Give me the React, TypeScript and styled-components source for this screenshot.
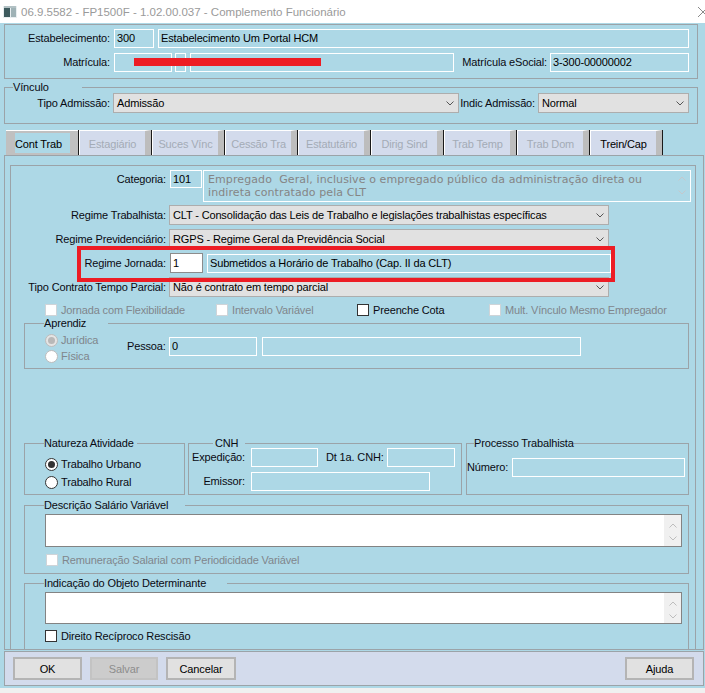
import React from "react";
import styled, { createGlobalStyle } from "styled-components";

const LINE = "#9ba3a8";
const BLUE = "#add8e6";
const LAV = "#d3dbec";

const GlobalStyle = createGlobalStyle`
  html, body { margin: 0; padding: 0; background: #f0f0f0; }
  body {
    font-family: "Liberation Sans", Arial, sans-serif;
    font-size: 11px;
    letter-spacing: -0.15px;
    color: #000;
  }
  #root { width: 705px; height: 693px; }
`;

const Window = styled.div`
  width: 705px;
  height: 693px;
  background: #f0f0f0;
  display: flex;
  flex-direction: column;
  overflow: hidden;
`;

const TitleBar = styled.div`
  height: 23px;
  flex: none;
  background: #fff;
  display: flex;
  align-items: center;
  padding-left: 3px;
  overflow: hidden;
`;

const TitleText = styled.span`
  font-family: "Liberation Sans", Arial, sans-serif;
  font-size: 11.5px;
  letter-spacing: 0;
  color: #9a9a9a;
  margin-left: 4px;
  flex: 1;
  white-space: nowrap;
`;

const Body = styled.div`
  height: 665px;
  flex: none;
  background: ${BLUE};
  padding: 1px 1px 0 4px;
  box-sizing: border-box;
  display: flex;
  flex-direction: column;
`;

const HeaderPanel = styled.div`
  width: 694px;
  height: 55px;
  flex: none;
  box-sizing: border-box;
  border: 1px solid ${LINE};
  padding-top: 4px;
  display: flex;
  flex-direction: column;
  gap: 5px;
`;

const Row = styled.div<{ $mt?: number; $ml?: number; $h?: number; $gap?: number }>`
  display: flex;
  align-items: flex-start;
  position: relative;
  flex: none;
  margin-top: ${(p) => p.$mt ?? 0}px;
  margin-left: ${(p) => p.$ml ?? 0}px;
  ${(p) => (p.$h ? `height: ${p.$h}px;` : "")}
  ${(p) => (p.$gap ? `gap: ${p.$gap}px;` : "")}
`;

const Label = styled.div<{ $w: number; $mr?: number; $lh?: number; $mt?: number; $ml?: number; $left?: boolean }>`
  width: ${(p) => p.$w}px;
  flex: none;
  text-align: ${(p) => (p.$left ? "left" : "right")};
  margin-right: ${(p) => p.$mr ?? 4}px;
  margin-left: ${(p) => p.$ml ?? 0}px;
  margin-top: ${(p) => p.$mt ?? 0}px;
  line-height: ${(p) => p.$lh ?? 19}px;
  white-space: nowrap;
  color: #0a0a12;
`;

const Field = styled.div<{ $w: number; $h?: number; $ml?: number; $mt?: number; $white?: boolean }>`
  width: ${(p) => p.$w}px;
  height: ${(p) => p.$h ?? 19}px;
  flex: none;
  box-sizing: border-box;
  border: 1px solid ${(p) => (p.$white ? "#8c8c8c" : "#fff")};
  background: ${(p) => (p.$white ? "#fff" : "transparent")};
  margin-left: ${(p) => p.$ml ?? 0}px;
  margin-top: ${(p) => p.$mt ?? 0}px;
  padding: 0 2px;
  line-height: ${(p) => (p.$h ?? 19) - 2}px;
  white-space: nowrap;
  overflow: hidden;
`;

const SelectBox = styled.div<{ $w: number; $h?: number }>`
  width: ${(p) => p.$w}px;
  height: ${(p) => p.$h ?? 20}px;
  flex: none;
  box-sizing: border-box;
  background: #e1e1e1;
  border: 1px solid #adadad;
  display: flex;
  align-items: center;
  justify-content: space-between;
  padding: 0 4px 0 3px;
  white-space: nowrap;
`;

const Redaction = styled.div`
  position: absolute;
  left: 129px;
  top: 5px;
  width: 187px;
  height: 8px;
  background: #ed1c24;
`;

const Group = styled.fieldset<{ $w: number; $h?: number; $mt?: number; $ml?: number; $pb?: number }>`
  margin: ${(p) => p.$mt ?? 0}px 0 0 ${(p) => p.$ml ?? 0}px;
  padding: 0 0 ${(p) => p.$pb ?? 0}px 0;
  border: 1px solid ${LINE};
  width: ${(p) => p.$w}px;
  ${(p) => (p.$h ? `height: ${p.$h}px;` : "")}
  box-sizing: border-box;
  min-width: 0;
  flex: none;
`;

const Legend = styled.legend<{ $w: number; $ml: number; $pl?: number }>`
  width: ${(p) => p.$w}px;
  margin-left: ${(p) => p.$ml}px;
  padding: 0 0 0 ${(p) => p.$pl ?? 0}px;
  height: 13px;
  line-height: 13px;
  box-sizing: border-box;
  white-space: nowrap;
  color: #0a0a12;
`;

const TabBar = styled.div`
  display: flex;
  height: 25px;
  margin: 6px 0 0 2px;
  flex: none;
`;

const Tab = styled.div<{ $enabled?: boolean }>`
  width: 72px;
  height: 25px;
  box-sizing: border-box;
  background: ${LAV};
  border-top: 1px solid #fff;
  border-left: 1px solid #fff;
  border-right: 6px solid #bdbdbd;
  box-shadow: 1px 0 0 #1a1a1a;
  margin-right: 1px;
  display: flex;
  align-items: center;
  justify-content: center;
  padding-top: 1px;
  color: ${(p) => (p.$enabled ? "#000" : "#a3abb6")};
  white-space: nowrap;
`;

const ActiveTab = styled.div`
  width: 72px;
  height: 25px;
  box-sizing: border-box;
  background: #c0c0c0;
  border-top: 1px solid #fff;
  padding: 2px 8px 2px 9px;
  margin-right: 1px;
  box-shadow: 1px 0 0 #1a1a1a;
  display: flex;
`;

const ActiveTabInner = styled.div`
  flex: 1;
  background: ${BLUE};
  display: flex;
  align-items: center;
  justify-content: flex-start;
  padding-top: 1px;
  white-space: nowrap;
`;

const OuterFrame = styled.div`
  width: 700px;
  height: 495px;
  flex: none;
  box-sizing: border-box;
  border: 1px solid ${LINE};
  overflow: hidden;
`;

const InnerFrame = styled.div`
  margin: 9px 0 0 5px;
  width: 686px;
  height: 500px;
  box-sizing: border-box;
  border: 1px solid ${LINE};
  border-bottom: none;
  position: relative;
  padding-top: 4px;
`;

const Highlight = styled.div`
  position: absolute;
  left: 66px;
  top: 80px;
  width: 538px;
  height: 36px;
  box-sizing: border-box;
  border: 4px solid #ed1c24;
  pointer-events: none;
`;

const TextArea = styled.div<{ $w: number; $h: number; $white?: boolean; $ml?: number; $mt?: number }>`
  width: ${(p) => p.$w}px;
  height: ${(p) => p.$h}px;
  flex: none;
  box-sizing: border-box;
  border: 1px solid ${(p) => (p.$white ? "#838383" : "#fff")};
  background: ${(p) => (p.$white ? "#fff" : "transparent")};
  margin-left: ${(p) => p.$ml ?? 0}px;
  margin-top: ${(p) => p.$mt ?? 0}px;
  display: flex;
`;

const AreaText = styled.div`
  flex: 1;
  font-family: "DejaVu Sans", Verdana, sans-serif;
  font-size: 11px;
  letter-spacing: 0.1px;
  color: #858585;
  line-height: 13px;
  padding: 2px 0 0 4px;
  white-space: pre;
  overflow: hidden;
`;

const ScrollStrip = styled.div<{ $bg: string; $pt: number; $gap: number }>`
  margin-left: auto;
  width: 17px;
  flex: none;
  background: ${(p) => p.$bg};
  display: flex;
  flex-direction: column;
  align-items: center;
  padding-top: ${(p) => p.$pt}px;
  gap: ${(p) => p.$gap}px;
  box-sizing: border-box;
`;

const CheckRow = styled.div<{ $mt?: number; $ml?: number }>`
  display: flex;
  align-items: center;
  height: 14px;
  flex: none;
  margin-top: ${(p) => p.$mt ?? 0}px;
  margin-left: ${(p) => p.$ml ?? 0}px;
`;

const CheckItem = styled.div<{ $w?: number; $disabled?: boolean }>`
  display: flex;
  align-items: center;
  gap: 4px;
  ${(p) => (p.$w ? `width: ${p.$w}px;` : "")}
  flex: none;
  height: 14px;
  white-space: nowrap;
  color: ${(p) => (p.$disabled ? "#80868c" : "#0a0a12")};
`;

const Box = styled.span<{ $disabled?: boolean }>`
  width: 12px;
  height: 12px;
  box-sizing: border-box;
  border: 1px solid ${(p) => (p.$disabled ? "#cfd4d8" : "#333")};
  background: #fff;
  flex: none;
`;

const RadioColumn = styled.div<{ $w: number; $ml: number; $mt: number; $ih: number }>`
  width: ${(p) => p.$w}px;
  margin-left: ${(p) => p.$ml}px;
  margin-top: ${(p) => p.$mt}px;
  flex: none;
  display: flex;
  flex-direction: column;
  & > div { height: ${(p) => p.$ih}px; }
`;

const RadioItem = styled.div<{ $disabled?: boolean }>`
  display: flex;
  align-items: center;
  gap: 3px;
  white-space: nowrap;
  color: ${(p) => (p.$disabled ? "#80868c" : "#0a0a12")};
`;

const Radio = styled.span<{ $disabled?: boolean; $checked?: boolean }>`
  width: 13px;
  height: 13px;
  box-sizing: border-box;
  border-radius: 50%;
  border: 1px solid ${(p) => (p.$disabled ? "#bcbcbc" : "#333")};
  background: ${(p) => (p.$disabled && p.$checked ? "#e4e4e4" : "#fff")};
  display: flex;
  align-items: center;
  justify-content: center;
  flex: none;
  &::after {
    content: "";
    width: 7px;
    height: 7px;
    border-radius: 50%;
    background: ${(p) => (p.$checked ? (p.$disabled ? "#b8b8b8" : "#333") : "transparent")};
  }
`;

const BottomBar = styled.div`
  margin-top: 1px;
  width: 700px;
  height: 35px;
  flex: none;
  box-sizing: border-box;
  background: ${LAV};
  border: 1px solid ${LINE};
  display: flex;
  align-items: center;
  padding: 0 9px 0 8px;
`;

const Button = styled.div<{ $w: number; $disabled?: boolean; $right?: boolean }>`
  width: ${(p) => p.$w}px;
  height: 23px;
  box-sizing: border-box;
  border: 2px solid ${(p) => (p.$disabled ? "#c3c3c3" : "#b4b4b4")};
  background: ${(p) => (p.$disabled ? "#cccccc" : "#e1e1e1")};
  color: ${(p) => (p.$disabled ? "#8d8d8d" : "#000")};
  display: flex;
  align-items: center;
  justify-content: center;
  margin-right: ${(p) => (p.$right ? 0 : 8)}px;
  margin-left: ${(p) => (p.$right ? "auto" : "0")};
`;

const BottomGroups = styled.div`
  display: flex;
  margin: 68px 0 0 13px;
`;

const Chevron = ({ up, color = "#555" }: { up?: boolean; color?: string }) => (
  <svg width="8" height="5" viewBox="0 0 8 5">
    <polyline
      points={up ? "0.5,4.5 4,1 7.5,4.5" : "0.5,0.5 4,4 7.5,0.5"}
      fill="none"
      stroke={color}
      strokeWidth="1"
    />
  </svg>
);

const Select = ({ w, h, children }: { w: number; h?: number; children: React.ReactNode }) => (
  <SelectBox $w={w} $h={h}>
    <span>{children}</span>
    <Chevron />
  </SelectBox>
);

const AppIcon = () => (
  <svg width="14" height="12" viewBox="0 0 14 12">
    <rect x="0" y="0" width="14" height="12" fill="#e8eef0" />
    <rect x="1" y="2" width="6" height="9" fill="#3e5b5e" />
    <rect x="8" y="2" width="5" height="9" fill="#9fb2b6" />
    <rect x="1" y="0.5" width="12" height="1" fill="#7d9498" />
  </svg>
);

const CloseIcon = () => (
  <svg width="12" height="12" viewBox="0 0 12 12" style={{ marginRight: -4 }}>
    <path d="M1 1 L11 11 M11 1 L1 11" stroke="#8a8a8a" strokeWidth="1" />
  </svg>
);

export default function App() {
  return (
    <Window>
      <GlobalStyle />
      <TitleBar>
        <AppIcon />
        <TitleText>06.9.5582 - FP1500F - 1.02.00.037 - Complemento Funcionário</TitleText>
        <CloseIcon />
      </TitleBar>
      <Body>
        <HeaderPanel>
          <Row>
            <Label $w={105}>Estabelecimento:</Label>
            <Field $w={40}>300</Field>
            <Field $w={531} $ml={4}>Estabelecimento Um Portal HCM</Field>
          </Row>
          <Row>
            <Label $w={105}>Matrícula:</Label>
            <Field $w={58} />
            <Field $w={11} $ml={3} />
            <Field $w={264} $ml={4} />
            <Label $w={93} $mr={3}>Matrícula eSocial:</Label>
            <Field $w={139}>3-300-00000002</Field>
            <Redaction />
          </Row>
        </HeaderPanel>

        <Group $w={694} $h={43} $mt={2}>
          <Legend $w={69} $ml={8}>Vínculo</Legend>
          <Row $mt={-1}>
            <Label $w={105} $mr={3} $lh={20}>Tipo Admissão:</Label>
            <Select w={346}>Admissão</Select>
            <Label $w={76} $mr={3} $lh={20}>Indic Admissão:</Label>
            <Select w={151}>Normal</Select>
          </Row>
        </Group>

        <TabBar>
          <ActiveTab>
            <ActiveTabInner>Cont Trab</ActiveTabInner>
          </ActiveTab>
          <Tab>Estagiário</Tab>
          <Tab>Suces Vínc</Tab>
          <Tab>Cessão Tra</Tab>
          <Tab>Estatutário</Tab>
          <Tab>Dirig Sind</Tab>
          <Tab>Trab Temp</Tab>
          <Tab>Trab Dom</Tab>
          <Tab $enabled>Trein/Cap</Tab>
        </TabBar>

        <OuterFrame>
          <InnerFrame>
            <Row>
              <Label $w={155} $mr={4}>Categoria:</Label>
              <Field $w={32} $h={18}>101</Field>
              <TextArea $w={488} $h={32} $ml={1}>
                <AreaText>{"Empregado  Geral, inclusive o empregado público da administração direta ou\nindireta contratado pela CLT"}</AreaText>
                <ScrollStrip $bg="transparent" $pt={5} $gap={9}>
                  <Chevron up color="#c4c8cc" />
                  <Chevron color="#c4c8cc" />
                </ScrollStrip>
              </TextArea>
            </Row>
            <Row $mt={3}>
              <Label $w={155} $mr={3} $lh={20}>Regime Trabalhista:</Label>
              <Select w={440}>CLT - Consolidação das Leis de Trabalho e legislações trabalhistas específicas</Select>
            </Row>
            <Row $mt={4}>
              <Label $w={155} $mr={3} $lh={20}>Regime Previdenciário:</Label>
              <Select w={440}>RGPS - Regime Geral da Previdência Social</Select>
            </Row>
            <Row $mt={4}>
              <Label $w={155} $mr={4} $lh={20}>Regime Jornada:</Label>
              <Field $w={33} $h={20} $white>1</Field>
              <Field $w={404} $ml={4} $mt={1}>Submetidos a Horário de Trabalho (Cap. II da CLT)</Field>
            </Row>
            <Row $mt={4}>
              <Label $w={155} $mr={3} $lh={20}>Tipo Contrato Tempo Parcial:</Label>
              <Select w={440}>Não é contrato em tempo parcial</Select>
            </Row>
            <CheckRow $mt={6} $ml={34}>
              <CheckItem $w={171} $disabled>
                <Box $disabled />
                Jornada com Flexibilidade
              </CheckItem>
              <CheckItem $w={141} $disabled>
                <Box $disabled />
                Intervalo Variável
              </CheckItem>
              <CheckItem $w={132}>
                <Box />
                Preenche Cota
              </CheckItem>
              <CheckItem $disabled>
                <Box $disabled />
                Mult. Vínculo Mesmo Empregador
              </CheckItem>
            </CheckRow>

            <Group $w={665} $ml={13} $pb={4}>
              <Legend $w={64} $ml={19}>Aprendiz</Legend>
              <Row>
                <RadioColumn $w={82} $ml={20} $mt={2} $ih={16}>
                  <RadioItem $disabled>
                    <Radio $disabled $checked />
                    Jurídica
                  </RadioItem>
                  <RadioItem $disabled>
                    <Radio $disabled />
                    Física
                  </RadioItem>
                </RadioColumn>
                <Label $w={38} $mr={4} $mt={7}>Pessoa:</Label>
                <Field $w={88} $mt={7}>0</Field>
                <Field $w={319} $ml={5} $mt={7} />
              </Row>
            </Group>

            <BottomGroups>
              <Group $w={161} $h={58}>
                <Legend $w={93} $ml={19}>Natureza Atividade</Legend>
                <RadioColumn $w={130} $ml={20} $mt={5} $ih={18}>
                  <RadioItem>
                    <Radio $checked />
                    Trabalho Urbano
                  </RadioItem>
                  <RadioItem>
                    <Radio />
                    Trabalho Rural
                  </RadioItem>
                </RadioColumn>
              </Group>
              <Group $w={274} $h={58} $ml={3}>
                <Legend $w={32} $ml={24} $pl={2}>CNH</Legend>
                <Row $mt={-2}>
                  <Label $w={56} $mr={6}>Expedição:</Label>
                  <Field $w={67} />
                  <Label $w={57} $ml={8} $mr={4}>Dt 1a. CNH:</Label>
                  <Field $w={68} />
                </Row>
                <Row $mt={5}>
                  <Label $w={56} $mr={6}>Emissor:</Label>
                  <Field $w={179} />
                </Row>
              </Group>
              <Group $w={223} $h={58} $ml={4}>
                <Legend $w={99} $ml={7}>Processo Trabalhista</Legend>
                <Row $mt={8}>
                  <Label $w={40} $mr={5} $left>Número:</Label>
                  <Field $w={173} />
                </Row>
              </Group>
            </BottomGroups>

            <Group $w={665} $ml={13} $mt={4} $pb={6}>
              <Legend $w={141} $ml={19}>Descrição Salário Variável</Legend>
              <TextArea $w={637} $h={33} $white $ml={20} $mt={2}>
                <ScrollStrip $bg="#f0f0f0" $pt={8} $gap={8}>
                  <Chevron up color="#bdbdbd" />
                  <Chevron color="#bdbdbd" />
                </ScrollStrip>
              </TextArea>
              <CheckRow $mt={6} $ml={21}>
                <CheckItem $disabled>
                  <Box $disabled />
                  Remuneração Salarial com Periodicidade Variável
                </CheckItem>
              </CheckRow>
            </Group>

            <Group $w={665} $ml={13} $mt={3} $pb={20}>
              <Legend $w={183} $ml={19}>Indicação do Objeto Determinante</Legend>
              <TextArea $w={637} $h={32} $white $ml={20} $mt={2}>
                <ScrollStrip $bg="#f0f0f0" $pt={8} $gap={8}>
                  <Chevron up color="#bdbdbd" />
                  <Chevron color="#bdbdbd" />
                </ScrollStrip>
              </TextArea>
              <CheckRow $mt={5} $ml={20}>
                <CheckItem>
                  <Box />
                  Direito Recíproco Rescisão
                </CheckItem>
              </CheckRow>
            </Group>

            <Highlight />
          </InnerFrame>
        </OuterFrame>

        <BottomBar>
          <Button $w={69}>OK</Button>
          <Button $w={68} $disabled>Salvar</Button>
          <Button $w={70}>Cancelar</Button>
          <Button $w={69} $right>Ajuda</Button>
        </BottomBar>
      </Body>
    </Window>
  );
}
